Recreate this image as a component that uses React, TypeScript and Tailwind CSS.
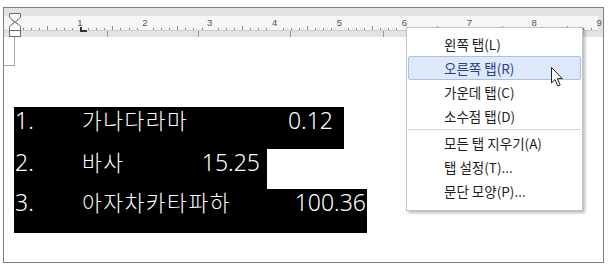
import React from 'react'

const UNIT = 64.9
const ORIGIN = 11

function Ruler() {
  const ticks: React.ReactNode[] = []
  const labels: React.ReactNode[] = []
  for (let n = 0; n < 10; n++) {
    for (let k = 1; k < 8; k++) {
      const x = Math.round(ORIGIN + UNIT * (n + k / 8)) + 0.5
      if (x > 594) continue
      ticks.push(<line key={`t${n}-${k}`} x1={x} x2={x} y1={k === 4 ? 18 : 20} y2={22} stroke="#8a8a8a" strokeWidth={1} />)
    }
    if (n > 0) {
      labels.push(
        <text key={`n${n}`} x={ORIGIN + UNIT * n} y={18} fontSize={9.5} textAnchor="middle" fill="#555" fontFamily="'Liberation Sans', Arial, sans-serif">
          {n}
        </text>
      )
    }
  }

  return (
    <svg width={599} height={29} className="block">
      <rect x={0} y={0} width={599} height={29} fill="#e3e3e3" />
      <rect x={0} y={8} width={594} height={14} fill="#f6f6f6" />
      <line x1={0} x2={594} y1={22.5} y2={22.5} stroke="#cfcfcf" />
      {ticks}
      {labels}
      {[103, 194, 286, 379].map((x) => (
        <line key={x} x1={x + 0.5} x2={x + 0.5} y1={23} y2={29} stroke="#9a9a9a" />
      ))}
      {/* left tab marker */}
      <rect x={76} y={19} width={2} height={5} fill="#333" />
      <rect x={76} y={22} width={7} height={2} fill="#333" />
      {/* indent hourglass */}
      <g stroke="#6e6e6e" strokeWidth={1} fill="#fbfbfb">
        <polygon points="5.5,5.5 16.5,5.5 16.5,9.5 11,14 5.5,9.5" />
        <polygon points="11,14 16.5,18.5 16.5,22.5 5.5,22.5 5.5,18.5" />
        <rect x={5.5} y={22.5} width={11} height={6} />
      </g>
      <line x1={8} x2={14} y1={12} y2={16} stroke="#4a7fd0" strokeWidth={0.8} />
      <line x1={14} x2={8} y1={12} y2={16} stroke="#d08a4a" strokeWidth={0.8} />
    </svg>
  )
}

interface Row {
  num: string
  text: string
  value: string
  width: string
  height: string
  pr: string
}

const rows: Row[] = [
  { num: '1.', text: '가나다라마', value: '0.12', width: 'w-[330px]', height: 'h-[42px]', pr: 'pr-[11px]' },
  { num: '2.', text: '바사', value: '15.25', width: 'w-[253px]', height: 'h-[40px]', pr: 'pr-[7px]' },
  { num: '3.', text: '아자차카타파하', value: '100.36', width: 'w-[353px]', height: 'h-[44px]', pr: 'pr-[1px]' },
]

const menuItems = [
  { label: '왼쪽 탭(L)' },
  { label: '오른쪽 탭(R)', active: true },
  { label: '가운데 탭(C)' },
  { label: '소수점 탭(D)', sep: true },
  { label: '모든 탭 지우기(A)' },
  { label: '탭 설정(T)...' },
  { label: '문단 모양(P)...' },
]

function ContextMenu() {
  return (
    <div className="absolute left-[406px] top-[27px] w-[177px] h-[184px] bg-white border border-[#c4c4c4] shadow-[2px_2px_3px_rgba(0,0,0,0.28)] pt-[4px] font-['Noto_Sans_CJK_KR',sans-serif] text-[13.5px]">
      {menuItems.map((item) => (
        <React.Fragment key={item.label}>
          <div
            className={
              item.active
                ? 'mx-[1px] h-[24px] flex items-center pl-[35px] rounded-[2px] border border-[#a9c1ea] bg-[#dfe8f8] text-[#26438c]'
                : 'mx-[1px] h-[24px] flex items-center pl-[35px] border border-transparent text-[#1e1e1e]'
            }
          >
            {item.label}
          </div>
          {item.sep && <div className="mx-[1px] my-[1px] h-[1px] bg-[#d6d6d6]" />}
        </React.Fragment>
      ))}
    </div>
  )
}

function Cursor() {
  return (
    <svg className="absolute left-[550px] top-[66px]" width={14} height={22} viewBox="0 0 14 22">
      <path d="M1.5 1.5 L1.5 17 L5 13.6 L7.8 20 L10.2 19 L7.4 12.6 L12.3 12.6 Z" fill="#fff" stroke="#222" strokeWidth={1} strokeLinejoin="round" />
    </svg>
  )
}

export default function App() {
  return (
    <div className="relative w-[610px] h-[267px] bg-white pt-[7px] pl-[3px] overflow-hidden">
      <div className="w-[601px] h-[256px] border border-[#7f7f7f] bg-white">
        <Ruler />
        <div className="w-[11px] h-[29px] border-r border-b border-[#a6a6a6]" />
        <div className="mt-[41px] ml-[10px] text-white">
          {rows.map((r) => (
            <div key={r.num} className={`flex items-start bg-black ${r.width} ${r.height} ${r.pr}`}>
              <span className="w-[68px] pl-[1px] leading-[26px] text-[23px] font-light font-['Noto_Sans',sans-serif]">{r.num}</span>
              <span className="flex-1 leading-[26px] text-[21.5px] tracking-[1.5px] font-light font-['Noto_Sans_CJK_KR',sans-serif]">{r.text}</span>
              <span className="leading-[26px] text-[23px] font-light font-['Noto_Sans',sans-serif]">{r.value}</span>
            </div>
          ))}
        </div>
      </div>
      <ContextMenu />
      <Cursor />
    </div>
  )
}
